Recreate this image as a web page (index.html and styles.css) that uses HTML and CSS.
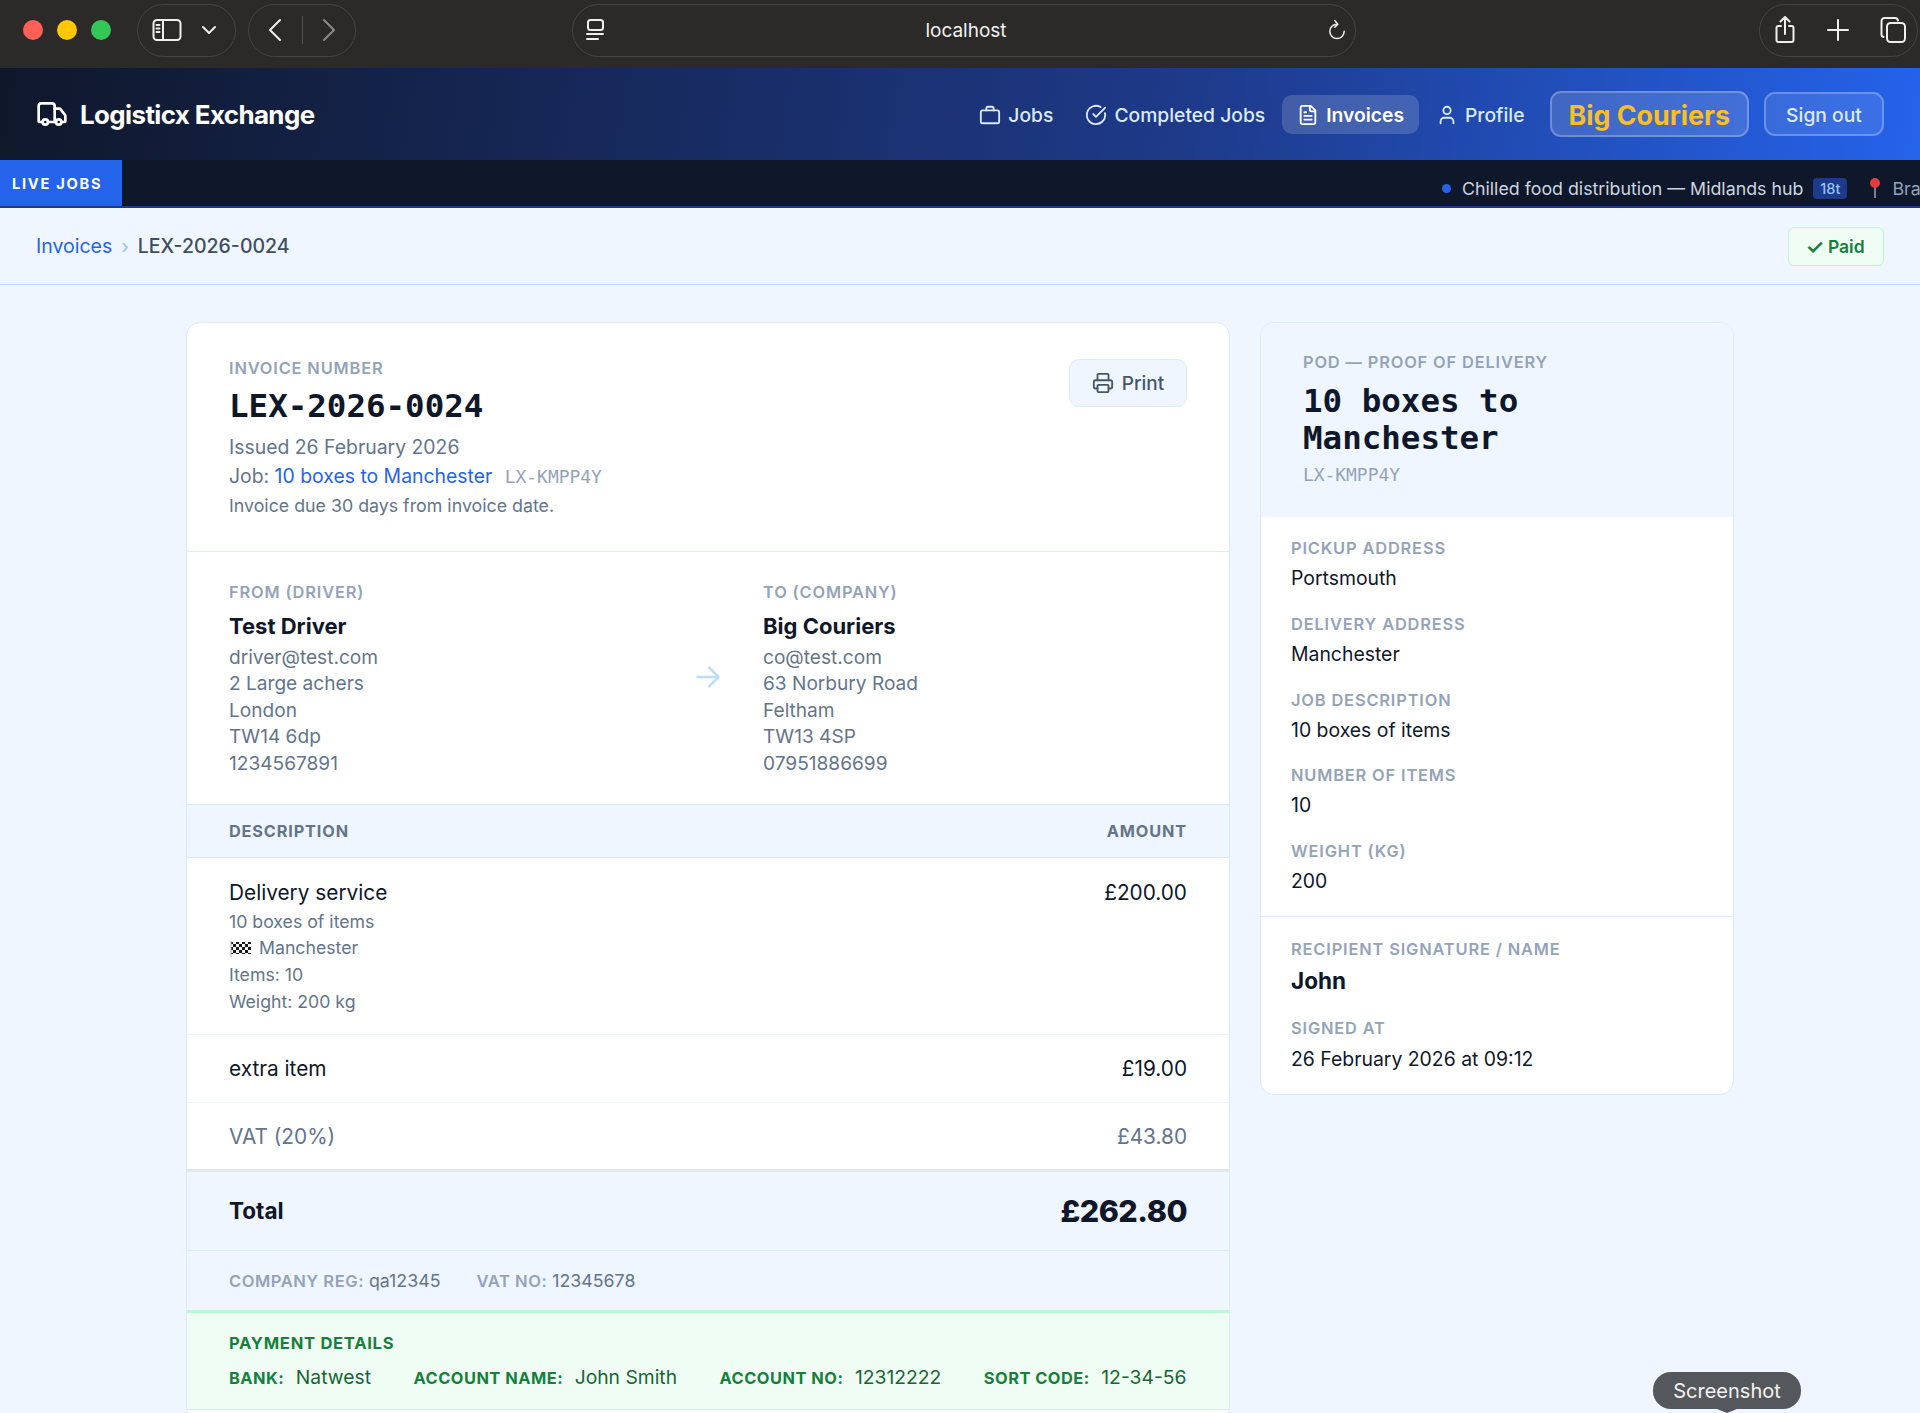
FILE: index.html
```html
<!DOCTYPE html>
<html lang="en">
<head>
<meta charset="utf-8">
<title>Logisticx Exchange</title>
<link rel="stylesheet" href="styles.css">
</head>
<body>
<div class="chrome">
  <div class="lights"><span class="light red"></span><span class="light yellow"></span><span class="light green"></span></div>
  <div class="pill pill-side">
    <svg class="ci" width="30" height="24" viewBox="0 0 30 24"><rect x="1.5" y="2" width="27" height="20" rx="3.5"/><path d="M11 2v20M4.500 7h3M4.500 10.500h3M4.500 14h3"/></svg>
    <svg class="ci" width="16" height="10" viewBox="0 0 16 10"><path d="M2 2l6 6 6-6"/></svg>
  </div>
  <div class="pill pill-nav">
    <svg class="ci" width="16" height="24" viewBox="0 0 16 24"><path d="M13 2L3 12l10 10"/></svg>
    <span class="pill-sep"></span>
    <svg class="ci ci-dim" width="16" height="24" viewBox="0 0 16 24"><path d="M3 2l10 10L3 22"/></svg>
  </div>
  <div class="url">
    <svg class="ci url-ic" width="18" height="22" viewBox="0 0 18 22"><rect x="2" y="1" width="15" height="10" rx="2.500"/><path d="M1 15h16M1 20h11"/></svg>
    <span class="url-text">localhost</span>
    <svg class="ci ci-thin" width="18" height="22" viewBox="0 0 20 24"><path d="M10 5.500A8 8 0 1 0 18 13.500"/><path d="M7.500 1.500L11 5.500 7.500 9"/></svg>
  </div>
  <div class="pill pill-right">
    <svg class="ci" width="22" height="28" viewBox="0 0 22 28"><path d="M7 10H4.500a2 2 0 0 0-2 2v12a2 2 0 0 0 2 2h13a2 2 0 0 0 2-2V12a2 2 0 0 0-2-2H15M11 18V1M6.500 5.500L11 1l4.500 4.500"/></svg>
    <svg class="ci" width="22" height="22" viewBox="0 0 22 22"><path d="M11 1v20M1 11h20"/></svg>
    <svg class="ci" width="26" height="26" viewBox="0 0 26 26"><rect x="7" y="6" width="18" height="19" rx="3.500"/><path d="M3.500 20A2.500 2.500 0 0 1 1.500 17.500V4A3 3 0 0 1 4.500 1H15a3 3 0 0 1 3 2.500"/></svg>
  </div>
</div>

<header class="topbar">
  <div class="brand">
    <svg class="ic brand-ic" width="32" height="32" viewBox="0 0 24 24"><path d="M14 18V6a2 2 0 0 0-2-2H4a2 2 0 0 0-2 2v11a1 1 0 0 0 1 1h2"/><path d="M15 18H9"/><path d="M19 18h2a1 1 0 0 0 1-1v-3.650a1 1 0 0 0-.220-.624l-3.480-4.350A1 1 0 0 0 17.520 8H14"/><circle cx="17" cy="18" r="2"/><circle cx="7" cy="18" r="2"/></svg>
    <span class="brand-name">Logisticx Exchange</span>
  </div>
  <nav class="nav">
    <a class="nav-item"><svg class="ic" width="22" height="22" viewBox="0 0 24 24"><rect x="2" y="7" width="20" height="14" rx="2"/><path d="M16 7V5a2 2 0 0 0-2-2h-4a2 2 0 0 0-2 2v2"/></svg>Jobs</a>
    <a class="nav-item"><svg class="ic" width="22" height="22" viewBox="0 0 24 24"><path d="M21.801 10A10 10 0 1 1 17 3.335"/><path d="m9 11 3 3L22 4"/></svg>Completed Jobs</a>
    <a class="nav-item nav-active"><svg class="ic" width="22" height="22" viewBox="0 0 24 24"><path d="M15 2H6a2 2 0 0 0-2 2v16a2 2 0 0 0 2 2h12a2 2 0 0 0 2-2V7Z"/><path d="M14 2v4a2 2 0 0 0 2 2h4"/><path d="M10 9H8"/><path d="M16 13H8"/><path d="M16 17H8"/></svg>Invoices</a>
    <a class="nav-item"><svg class="ic" width="22" height="22" viewBox="0 0 24 24"><path d="M19 21v-2a4 4 0 0 0-4-4H9a4 4 0 0 0-4 4v2"/><circle cx="12" cy="7" r="4"/></svg>Profile</a>
    <a class="company">Big Couriers</a>
    <a class="signout">Sign out</a>
  </nav>
</header>

<div class="ticker">
  <div class="ticker-label">LIVE JOBS</div>
  <div class="ticker-track">
    <span class="ticker-dot"></span>
    <span>Chilled food distribution — Midlands hub</span>
    <span class="ticker-badge">18t</span>
    <svg class="pin" width="14" height="22" viewBox="0 0 14 22"><path d="M7 10v11" stroke="#94a3b8" stroke-width="1.500"/><circle cx="7" cy="6" r="5" fill="#e23b3b"/></svg>
    <span class="ticker-next">Braintree to Leeds</span>
  </div>
</div>

<div class="crumbs">
  <div class="crumb-path"><a class="crumb-link">Invoices</a><span class="crumb-sep">›</span><span class="crumb-here">LEX-2026-0024</span></div>
  <span class="paid"><span class="paid-check">✓</span> Paid</span>
</div>

<main class="layout">
  <section class="card invoice">
    <div class="inv-head">
      <div>
        <div class="label">INVOICE NUMBER</div>
        <h1 class="inv-no">LEX-2026-0024</h1>
        <div class="inv-line">Issued 26 February 2026</div>
        <div class="inv-line">Job: <a class="link">10 boxes to Manchester</a> <span class="mono-ref">LX-KMPP4Y</span></div>
        <div class="inv-due">Invoice due 30 days from invoice date.</div>
      </div>
      <button class="print"><svg class="ic" width="22" height="22" viewBox="0 0 24 24"><path d="M6 18H4a2 2 0 0 1-2-2v-5a2 2 0 0 1 2-2h16a2 2 0 0 1 2 2v5a2 2 0 0 1-2 2h-2"/><path d="M6 9V3a1 1 0 0 1 1-1h10a1 1 0 0 1 1 1v6"/><rect x="6" y="14" width="12" height="8" rx="1"/></svg>Print</button>
    </div>

    <div class="parties">
      <div class="party">
        <div class="label">FROM (DRIVER)</div>
        <div class="party-name">Test Driver</div>
        <div class="party-line">driver@test.com</div>
        <div class="party-line">2 Large achers</div>
        <div class="party-line">London</div>
        <div class="party-line">TW14 6dp</div>
        <div class="party-line">1234567891</div>
      </div>
      <svg class="party-arrow" width="28" height="28" viewBox="0 0 24 24"><path d="M3 12h18M13 4l8 8-8 8"/></svg>
      <div class="party">
        <div class="label">TO (COMPANY)</div>
        <div class="party-name">Big Couriers</div>
        <div class="party-line">co@test.com</div>
        <div class="party-line">63 Norbury Road</div>
        <div class="party-line">Feltham</div>
        <div class="party-line">TW13 4SP</div>
        <div class="party-line">07951886699</div>
      </div>
    </div>

    <div class="table-head"><span>DESCRIPTION</span><span>AMOUNT</span></div>
    <div class="row row-main">
      <div>
        <div class="row-title row-title-main">Delivery service</div>
        <div class="row-sub">10 boxes of items</div>
        <div class="row-sub"><svg class="flag" width="21" height="16" viewBox="0 0 21 16"><defs><pattern id="chk" width="6" height="6" patternUnits="userSpaceOnUse"><rect width="6" height="6" fill="#f4f4f4"/><rect width="3" height="3" fill="#1a1a1a"/><rect x="3" y="3" width="3" height="3" fill="#1a1a1a"/></pattern></defs><path d="M1 1h20v12H1z" fill="url(#chk)"/><path d="M1 0v16" stroke="#aaa"/></svg>Manchester</div>
        <div class="row-sub">Items: 10</div>
        <div class="row-sub">Weight: 200 kg</div>
      </div>
      <div class="row-amt">£200.00</div>
    </div>
    <div class="row row-extra"><div class="row-title">extra item</div><div class="row-amt">£19.00</div></div>
    <div class="row row-vat"><div>VAT (20%)</div><div>£43.80</div></div>
    <div class="total"><span class="total-label">Total</span><span class="total-amt">£262.80</span></div>
    <div class="regs"><span><b>COMPANY REG:</b> qa12345</span><span><b>VAT NO:</b> 12345678</span></div>
    <div class="payment">
      <div class="pay-title">PAYMENT DETAILS</div>
      <div class="pay-row">
        <span class="pay-item"><b>BANK:</b>Natwest</span>
        <span class="pay-item"><b>ACCOUNT NAME:</b>John Smith</span>
        <span class="pay-item"><b>ACCOUNT NO:</b>12312222</span>
        <span class="pay-item"><b>SORT CODE:</b>12-34-56</span>
      </div>
    </div>
  </section>

  <aside class="card pod">
    <div class="pod-head">
      <div class="label">POD — PROOF OF DELIVERY</div>
      <h2 class="pod-title">10 boxes to Manchester</h2>
      <div class="mono-ref pod-ref">LX-KMPP4Y</div>
    </div>
    <div class="pod-body">
      <div class="field"><div class="label">PICKUP ADDRESS</div><div class="value">Portsmouth</div></div>
      <div class="field"><div class="label">DELIVERY ADDRESS</div><div class="value">Manchester</div></div>
      <div class="field"><div class="label">JOB DESCRIPTION</div><div class="value">10 boxes of items</div></div>
      <div class="field"><div class="label">NUMBER OF ITEMS</div><div class="value">10</div></div>
      <div class="field"><div class="label">WEIGHT (KG)</div><div class="value">200</div></div>
    </div>
    <div class="pod-sign">
      <div class="field"><div class="label">RECIPIENT SIGNATURE / NAME</div><div class="value value-strong">John</div></div>
      <div class="field"><div class="label">SIGNED AT</div><div class="value">26 February 2026 at 09:12</div></div>
    </div>
  </aside>
</main>

<div class="tooltip">Screenshot</div>
</body>
</html>
```
FILE: styles.css
```css
* { box-sizing: border-box; }
html, body { margin: 0; height: 1413px; overflow: hidden; }
body { font-family: Inter, "Liberation Sans", sans-serif; background: #eff6ff; color: #0f172a; position: relative; }
h1, h2 { margin: 0; }
b { font-weight: 600; }

.chrome { height: 68px; background: #2b2a28; display: flex; align-items: center; padding: 0 2px 8px 23px; }
.lights { display: flex; gap: 14px; width: 114px; }
.light { width: 20px; height: 20px; border-radius: 50%; }
.red { background: #ff5f57; }
.yellow { background: #fdc800; }
.green { background: #33c758; }
.pill { height: 53px; border: 1.5px solid #45443f; border-radius: 27px; display: flex; align-items: center; }
.pill-side { width: 99px; padding: 0 18px 0 14px; justify-content: space-between; margin-right: 12px; }
.pill-nav { width: 108px; padding: 0 18px; justify-content: space-between; }
.pill-sep { width: 1px; height: 28px; background: #55544f; }
.pill-right { width: 159px; margin-left: auto; padding: 0 11px 0 14px; justify-content: space-between; }
.ci { fill: none; stroke: #eee; stroke-width: 2; stroke-linecap: round; stroke-linejoin: round; flex: none; }
.ci-dim { stroke: #8b8a86; }
.ci-thin { stroke-width: 1.700; }
.url { width: 784px; height: 53px; margin-left: 216px; border: 1.5px solid #45443f; border-radius: 27px; display: flex; align-items: center; padding: 0 9px 0 13px; color: #f2f2f2; font-size: 19px; position: relative; }
.url-text { flex: 1; text-align: center; }

.ic { fill: none; stroke: currentColor; stroke-width: 2; stroke-linecap: round; stroke-linejoin: round; flex: none; }
.topbar { height: 92px; background: linear-gradient(100deg, #0f172a 0%, #1e3a8a 62%, #2563eb 100%); display: flex; align-items: center; justify-content: space-between; padding: 0 36px; color: #fff; }
.brand { display: flex; align-items: center; gap: 12px; }
.brand-name { font-size: 25.900px; font-weight: 700; letter-spacing: -0.6px; }
.nav { display: flex; align-items: center; gap: 2px; }
.nav-item { display: flex; align-items: center; gap: 7px; height: 39px; padding: 1px 15px 0; border-radius: 10px; font-size: 19.300px; font-weight: 500; color: #dbeafe; }
.nav-active { background: rgba(255,255,255,.16); color: #fff; font-weight: 600; }
.company { margin-left: 8px; height: 46px; display: flex; align-items: center; padding: 1px 17px 0; border: 2px solid rgba(255,255,255,.25); background: rgba(255,255,255,.14); border-radius: 11px; color: #fbbf24; font-size: 26.800px; font-weight: 700; }
.signout { margin-left: 13px; height: 44px; width: 120px; display: flex; align-items: center; justify-content: center; padding-top: 1px; border: 2px solid rgba(255,255,255,.25); background: rgba(255,255,255,.1); border-radius: 11px; color: #dbeafe; font-size: 19.300px; font-weight: 500; }

.ticker { height: 48px; background: #0f172a; border-bottom: 2px solid #1e3a8a; display: flex; overflow: hidden; }
.ticker-label { width: 122px; padding: 1px 0 0 12px; background: #2563eb; color: #fff; font-size: 14.700px; font-weight: 700; letter-spacing: 1.700px; display: flex; align-items: center; flex: none; }
.ticker-track { display: flex; align-items: center; gap: 10px; margin-left: 1320px; padding-top: 10px; color: #cbd5e1; font-size: 17.800px; white-space: nowrap; flex: none; }
.ticker-dot { width: 9px; height: 9px; border-radius: 50%; background: #2563eb; margin-right: 1px; }
.ticker-badge { background: #1e3a8a; color: #93c5fd; font-size: 14.500px; font-weight: 500; border-radius: 4px; padding: 0 7px; height: 21px; display: flex; align-items: center; margin-right: 11px; }
.ticker-next { color: #94a3b8; }
.pin { flex: none; }

.crumbs { height: 77px; border-bottom: 1.500px solid #bfdbfe; display: flex; align-items: center; justify-content: space-between; padding: 0 36px; }
.crumb-path { display: flex; align-items: center; font-size: 19.500px; }
.crumb-link { color: #2563eb; }
.crumb-sep { color: #93c5fd; margin: 0 9px 0 9px; }
.crumb-here { color: #3f4d63; font-weight: 500; }
.paid { height: 39px; width: 96px; display: flex; align-items: center; justify-content: center; gap: 4px; padding-right: 2px; background: #f0fdf4; border: 1.500px solid #bbf7d0; border-radius: 6px; color: #15803d; font-size: 17.500px; font-weight: 600; }
.paid-check { font-size: 21px; line-height: 1; }

.layout { display: flex; align-items: flex-start; justify-content: center; gap: 30px; padding-top: 37px; }
.card { background: #fff; border: 1.500px solid #dbeafe; border-radius: 14px; overflow: hidden; }
.invoice { width: 1044px; height: 1100px; flex: none; }
.pod { width: 474px; flex: none; }
.label { font-size: 16.400px; font-weight: 600; letter-spacing: .85px; color: #94a3b8; line-height: 20px; }

.inv-head { height: 229px; border-bottom: 1.500px solid #dbeafe; padding: 35px 42px 0; display: flex; justify-content: space-between; align-items: flex-start; }
.inv-no { font-family: "DejaVu Sans Mono", monospace; font-size: 32.500px; font-weight: 700; line-height: 40px; margin: 7.500px 0 7px; }
.inv-line { font-size: 19.400px; color: #64748b; line-height: 29px; }
.inv-due { font-size: 17.800px; color: #64748b; line-height: 29px; }
.link { color: #2563eb; }
.mono-ref { font-family: "DejaVu Sans Mono", monospace; color: #94a3b8; font-size: 17.900px; margin-left: 7px; }
.print { display: flex; align-items: center; gap: 8px; height: 48px; width: 118px; margin-top: 1px; justify-content: center; background: #eff6ff; border: 1.500px solid #dbeafe; border-radius: 10px; color: #475569; font: 500 19px Inter, sans-serif; }

.parties { height: 253px; border-bottom: 1.500px solid #dbeafe; padding: 29.500px 42px 0; display: grid; grid-template-columns: 1fr 28px 1fr; column-gap: 41px; }
.party-name { font-size: 22px; font-weight: 700; line-height: 30px; margin: 9px 0 3px; }
.party-line { font-size: 19.100px; color: #64748b; line-height: 26.600px; }
.party-arrow { align-self: center; margin-top: -31px; fill: none; stroke: #bfdbfe; stroke-width: 2.200; stroke-linecap: round; stroke-linejoin: round; }

.table-head { height: 53px; background: #eff6ff; border-bottom: 1.500px solid #dbeafe; display: flex; align-items: center; justify-content: space-between; padding: 0 42px; font-size: 16.300px; font-weight: 700; letter-spacing: .85px; color: #64748b; }
.row { display: flex; justify-content: space-between; padding: 0 42px; border-bottom: 1.500px solid #eff6ff; }
.row-main { height: 176.500px; padding-top: 21px; }
.row-extra { height: 68px; align-items: center; }
.row-vat { height: 69px; padding-top: 1px; align-items: center; font-size: 20.800px; color: #64748b; border-bottom: 3px solid #e2e8f0; }
.row-title, .row-amt { font-size: 20.800px; color: #0f172a; line-height: 27px; }
.row-title-main { margin-bottom: 2.500px; }
.row-sub { font-size: 17.700px; color: #64748b; line-height: 26.900px; display: flex; align-items: center; gap: 8px; }
.flag { flex: none; margin-left: 1px; }
.total { height: 79px; background: #eff6ff; border-bottom: 1.500px solid #dbeafe; display: flex; align-items: center; justify-content: space-between; padding: 0 42px; }
.total-label { font-size: 22.500px; font-weight: 700; }
.total-amt { font-size: 30.500px; font-weight: 800; letter-spacing: -.5px; }
.regs { height: 59px; background: #eff6ff; display: flex; align-items: center; gap: 36px; padding: 0 42px; font-size: 17.800px; color: #64748b; }
.regs b { font-size: 16.600px; color: #94a3b8; letter-spacing: .5px; }
.payment { height: 100px; background: #f0fdf4; border-top: 3px solid #bbf7d0; border-bottom: 1.500px solid #dbeafe; padding: 20px 42px 0; color: #166534; }
.pay-title { font-size: 16.600px; font-weight: 700; letter-spacing: .7px; color: #15803d; line-height: 20px; }
.pay-row { display: flex; gap: 42.500px; margin-top: 11px; font-size: 19.300px; line-height: 26px; white-space: nowrap; }
.pay-item { display: flex; align-items: baseline; gap: 11.500px; }
.pay-item b { font-size: 16.400px; font-weight: 700; letter-spacing: .5px; color: #15803d; }

.pod-head { height: 194px; background: #eff6ff; padding: 29px 42px 0; }
.pod-title { font-family: "DejaVu Sans Mono", monospace; font-size: 32.500px; font-weight: 700; line-height: 37px; margin-top: 11px; width: 300px; }
.pod-ref { display: block; margin: 7px 0 0; }
.pod-body { padding: 21px 30px 18.500px; border-bottom: 1.500px solid #dbeafe; }
.pod-sign { padding: 22.500px 30px 19px; }
.field { margin-bottom: 19.800px; }
.field:last-child { margin-bottom: 0; }
.value { font-size: 19.400px; line-height: 31px; margin-top: 5px; color: #0f172a; }
.value-strong { font-size: 22.500px; font-weight: 700; line-height: 33px; margin: 5px 0 21px; }
.pod-sign .field { margin-bottom: 0; }
.pod-sign .field:last-child .value { margin-top: 6px; }

.tooltip { position: absolute; left: 1653px; top: 1372px; width: 148px; height: 37px; background: #54575c; border-radius: 18px; color: #f2f2f2; font-size: 20px; display: flex; align-items: center; justify-content: center; }
.tooltip::after { content: ""; position: absolute; left: 64px; bottom: -4px; border-left: 10px solid transparent; border-right: 10px solid transparent; border-top: 4px solid #54575c; }
```
